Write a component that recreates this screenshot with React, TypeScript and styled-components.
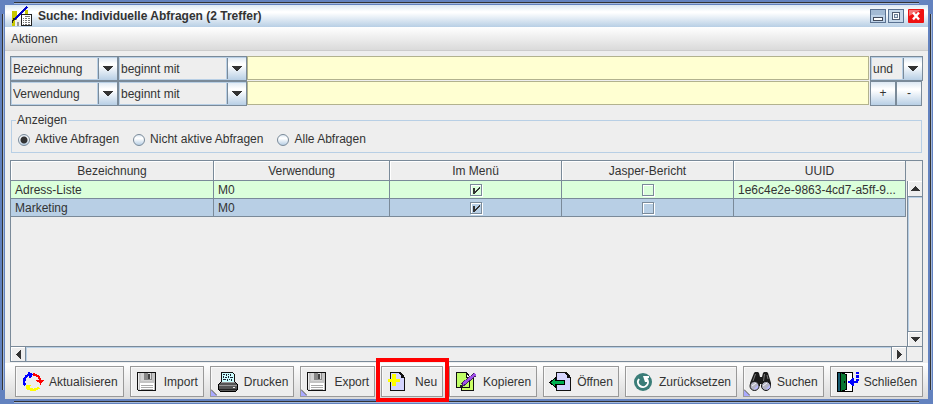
import React, { useState } from "react";
import styled, { createGlobalStyle, css } from "styled-components";

const color = {
  frame: "#6382bf",
  line: "#7a8a99",
  soft: "#b8cfe5",
  panel: "#eeeeee",
  text: "#333333",
};

const metal = "linear-gradient(#dde8f3 0%, #ffffff 30%, #ffffff 35%, #b8cfe5 100%)";

const GlobalStyle = createGlobalStyle`
  * { box-sizing: border-box; }
  body { margin: 0; }
  body, button, input, select { font: 12px/15px "Liberation Sans", Arial, sans-serif; color: ${color.text}; }
  svg { display: block; }
`;

const Window = styled.main`
  position: relative;
  display: flex;
  flex-direction: column;
  min-height: 100vh;
  border: 5px solid ${color.frame};
  background: ${color.panel};
`;

const FrameLine = styled.span<{ $side: "top" | "right" | "bottom" | "left" }>`
  position: absolute;
  background: #333;
  ${({ $side }) =>
    $side === "top" || $side === "bottom"
      ? css`
          left: 9px;
          right: 9px;
          height: 1px;
          ${$side}: -3px;
          box-shadow: 0 1px #a3b8dc;
        `
      : css`
          top: 9px;
          bottom: 9px;
          width: 1px;
          ${$side}: -3px;
          box-shadow: 1px 0 #a3b8dc;
        `}
`;

const TitleBar = styled.header`
  display: flex;
  align-items: center;
  height: 22px;
  padding: 0 4px 0 6px;
  background: ${metal};
`;

const Title = styled.h1`
  flex: 1;
  margin: 0 0 0 5px;
  padding-top: 1px;
  font-size: 12px;
  line-height: 15px;
`;

const WindowButtons = styled.div`
  display: flex;
  gap: 2px;
`;

const WindowButton = styled.button<{ $close?: boolean }>`
  width: 16px;
  height: 14px;
  padding: 0;
  border: 0;
  background: none;
  margin-left: ${({ $close }) => ($close ? "2px" : "0")};
`;

const MenuBar = styled.nav`
  height: 24px;
  padding: 0 6px;
  border-bottom: 1px solid #cccccc;
  background: linear-gradient(#ffffff, #dadada);
`;

const MenuItem = styled.button`
  padding: 5px 0 3px;
  border: 0;
  background: none;
`;

const Content = styled.div`
  flex: 1;
  display: flex;
  flex-direction: column;
  padding: 5px 5px 1px;
`;

const FilterRow = styled.div`
  display: flex;
  height: 25px;
`;

const ComboBox = styled.div<{ $width: number }>`
  position: relative;
  flex: none;
  width: ${({ $width }) => $width}px;
  border: 1px solid ${color.line};
  background: ${metal};

  svg {
    position: absolute;
    top: 9px;
    right: 4px;
    pointer-events: none;
  }
`;

const ComboSelect = styled.select`
  appearance: none;
  width: 100%;
  height: 100%;
  padding: 2px 20px 0 1px;
  border: 1px solid ${color.soft};
  border-right: 0;
  border-radius: 0;
  background:
    linear-gradient(${color.line}, ${color.line}) right 18px top / 1px 100% no-repeat,
    linear-gradient(${color.soft}, ${color.soft}) right 19px top / 1px 100% no-repeat,
    linear-gradient(to left, transparent 18px, ${color.panel} 18px);
`;

const FilterInput = styled.input`
  flex: 1;
  min-width: 0;
  height: 24px;
  margin-right: 1px;
  padding: 0 4px;
  border: 1px solid #b2b28e;
  border-radius: 0;
  background: #ffffd2;
`;

const RowActions = styled.div`
  display: flex;
  width: 53px;
`;

const SmallButton = styled.button`
  width: 26px;
  padding: 0;
  border: 1px solid ${color.line};
  background: ${metal};
`;

const Group = styled.fieldset`
  display: flex;
  gap: 14px;
  min-width: 0;
  margin: 7px 1px 0;
  padding: 4px 6px 5px;
  border: 1px solid ${color.soft};

  legend {
    margin-left: -2px;
    padding: 0 1px;
  }
`;

const RadioLabel = styled.label`
  display: flex;
  align-items: center;
  gap: 5px;
`;

const Radio = styled.input`
  appearance: none;
  width: 12px;
  height: 12px;
  margin: 0;
  border: 1px solid ${color.line};
  border-radius: 50%;
  background: ${metal};

  &:checked {
    background: radial-gradient(circle, #333 0 3px, transparent 4px), ${metal};
  }
`;

const TablePane = styled.section`
  flex: 1;
  display: grid;
  grid-template-columns: minmax(0, 1fr) 16px;
  grid-template-rows: minmax(169px, 1fr) 15px;
  margin-top: 7px;
  border: 1px solid ${color.line};
`;

const Table = styled.table`
  align-self: start;
  width: 100%;
  table-layout: fixed;
  border-collapse: separate;
  border-spacing: 0;
`;

const Column = styled.col<{ $width?: number }>`
  width: ${({ $width }) => ($width ? `${$width}px` : "auto")};
`;

const HeadCell = styled.th`
  height: 20px;
  padding: 2px 4px 0;
  border-right: 1px solid ${color.line};
  border-bottom: 1px solid ${color.line};
  box-shadow: inset 1px 1px #fff;
  font-weight: normal;
`;

const Row = styled.tr<{ $selected: boolean }>`
  background: ${({ $selected }) => ($selected ? color.soft : "#dbffdb")};
`;

const Cell = styled.td<{ $center?: boolean }>`
  height: 18px;
  padding: ${({ $center }) => ($center ? "0 4px" : "2px 4px 0")};
  border-right: 1px solid ${color.line};
  border-bottom: 1px solid ${color.line};
  white-space: nowrap;
  text-align: ${({ $center }) => ($center ? "center" : "left")};
`;

const CheckLabel = styled.label`
  position: relative;
  display: block;
  width: 12px;
  height: 12px;
  margin: 0 auto;

  svg {
    position: absolute;
    top: 2px;
    left: 2px;
    visibility: hidden;
    pointer-events: none;
  }
  input:checked + svg { visibility: visible; }
`;

const Check = styled.input`
  appearance: none;
  display: block;
  width: 12px;
  height: 12px;
  margin: 0;
  border: 1px solid ${color.line};
  box-shadow: inset 1px 1px #fff, 1px 1px #fff;
`;

const VerticalBar = styled.div`
  display: flex;
  flex-direction: column;
  padding: 20px 0 0 1px;
`;

const VerticalTrack = styled.div`
  flex: 1;
  border-left: 1px solid ${color.line};
  box-shadow: inset 1px 1px ${color.soft};
`;

const HorizontalBar = styled.div`
  display: flex;
  border-top: 1px solid ${color.line};
`;

const HorizontalTrack = styled.div`
  flex: 1;
  box-shadow: inset 1px 1px ${color.soft};
`;

const ScrollButton = styled.button<{ $edge: "top" | "bottom" | "left" | "right" }>`
  display: grid;
  place-items: center;
  width: 15px;
  height: ${({ $edge }) => ($edge === "top" ? 16 : $edge === "bottom" ? 15 : 14)}px;
  padding: 0;
  border: 0 solid ${color.line};
  border-left-width: ${({ $edge }) => ($edge === "left" ? 0 : 1)}px;
  border-right-width: ${({ $edge }) => ($edge === "left" ? 1 : 0)}px;
  border-top-width: ${({ $edge }) => ($edge === "bottom" ? 1 : 0)}px;
  border-bottom-width: ${({ $edge }) => ($edge === "top" ? 1 : 0)}px;
  background: ${color.panel};
  box-shadow: inset 1px 1px #fff;
`;

const ScrollCorner = styled.div`
  border-top: 1px solid ${color.line};
  border-left: 1px solid ${color.line};
`;

const Toolbar = styled.footer`
  display: flex;
  gap: 6px;
  padding: 3px 2px 2px 10px;
  background: linear-gradient(#ffffff, #dadada);
`;

const ToolItem = styled.div`
  position: relative;
`;

const ToolButton = styled.button`
  display: flex;
  align-items: center;
  gap: 4px;
  height: 31px;
  padding: 1px 5px 0;
  border: 1px solid #999999;
  background: ${color.panel};
  box-shadow: inset 1px 1px #fafafa;
  white-space: nowrap;
`;

const Corner = styled.svg`
  position: absolute;
  left: 1px;
  bottom: 1px;
  pointer-events: none;
`;

const Highlight = styled.span`
  position: absolute;
  inset: -8px -6px -5px -5px;
  z-index: 1;
  border: 4px solid #ff0000;
  pointer-events: none;
`;

type Direction = "up" | "down" | "left" | "right";

const arrows: Record<Direction, string> = {
  up: "M4 0h1v1h1v1h1v1h1v1h1v1H0V4h1V3h1V2h1V1h1z",
  down: "M0 0h9v1H8v1H7v1H6v1H5v1H4V4H3V3H2V2H1V1H0z",
  left: "M4 0h1v9H4V8H3V7H2V6H1V5H0V4h1V3h1V2h1V1h1z",
  right: "M0 0h1v1h1v1h1v1h1v1h1v1H4v1H3v1H2v1H1v1H0z",
};

function Arrow({ to }: { to: Direction }) {
  const flat = to === "up" || to === "down";
  return (
    <svg width={flat ? 9 : 5} height={flat ? 5 : 9} shapeRendering="crispEdges" aria-hidden="true">
      <path d={arrows[to]} fill="#333" />
    </svg>
  );
}

function Combo({ label, width, options }: { label: string; width: number; options: string[] }) {
  return (
    <ComboBox $width={width}>
      <ComboSelect aria-label={label}>
        {options.map((o) => (
          <option key={o}>{o}</option>
        ))}
      </ComboSelect>
      <svg width="10" height="5" shapeRendering="crispEdges" aria-hidden="true">
        <path d="M0 0h10v1H9v1H8v1H7v1H6v1H4V4H3V3H2V2H1V1H0z" fill="#333" />
      </svg>
    </ComboBox>
  );
}

function TitleIcon() {
  return (
    <svg width="22" height="21" viewBox="0 0 22 21" shapeRendering="crispEdges" aria-hidden="true">
      <path d="M1 5h5v15H1z" fill="#c8c800" />
      <path d="M14 4h3v6h-3z" fill="#c8c800" />
      <path d="M6 5h8v4h-4v5H6z" fill="#fff" />
      <path d="M4 14h6v6H4z" fill="#eee" />
      <path d="M6 16h2v4H6z" fill="#999" />
      <path d="M3 14L16 1" stroke="#0000c8" strokeWidth="2" />
      <path d="M1 17v-3h1v-2h2v2H3v1H2v2z" fill="#222" />
      <path d="M10.500 8.500h10v11h-10z" fill="#fff" stroke="#222" />
      <path d="M14 10h5v1h-5zM12 12h1v1h-1zM14 12h2v1h-2zM17 12h2v1h-2zM12 14h1v1h-1zM14 14h2v1h-2zM17 14h2v1h-2zM12 16h1v1h-1zM14 16h2v1h-2zM17 16h2v1h-2zM12 18h1v1h-1zM14 18h2v1h-2zM17 18h2v1h-2z" fill="#777" />
    </svg>
  );
}

function MinimizeIcon() {
  return (
    <svg width="16" height="14" viewBox="0 0 16 14" shapeRendering="crispEdges" aria-hidden="true">
      <path d="M.5.500h15v13H.5z" fill="#bed2e8" stroke="#5a7292" />
      <path d="M1 1h14v5H1z" fill="#a3bad4" />
      <path d="M3.500 8.500h9v3h-9z" fill="#fff" stroke="#444c5c" />
    </svg>
  );
}

function MaximizeIcon() {
  return (
    <svg width="16" height="14" viewBox="0 0 16 14" shapeRendering="crispEdges" aria-hidden="true">
      <path d="M.5.500h15v13H.5z" fill="#c6d8ea" stroke="#5a7292" />
      <path d="M4.500 3.500h7v7h-7z" fill="#fff" stroke="#4d5a70" />
      <path d="M6.500 5.500h3v3h-3z" fill="#dde8f3" stroke="#6d7f96" />
    </svg>
  );
}

function CloseIcon() {
  return (
    <svg width="16" height="14" viewBox="0 0 16 14" aria-hidden="true">
      <rect width="16" height="14" rx="1" fill="#ee1111" />
      <path d="M1 1h12L1 7z" fill="#f47474" />
      <path d="M5 3.500l6 7M11 3.500l-6 7" stroke="#fff" strokeWidth="2.400" />
    </svg>
  );
}

function RefreshIcon() {
  return (
    <>
      <path d="M4 15.500C1.500 11 4 6 8 4.500" fill="none" stroke="#0000ff" strokeWidth="2.500" />
      <path d="M7 2h2v1h2v1h1v1h-1v2h-1v1H8V6H7z" fill="#0000ff" />
      <path d="M12 4.500c4 0 7 2.500 7 6.500" fill="none" stroke="#ff0000" strokeWidth="2.500" />
      <path d="M15 10h8v1h-1v1h-1v1h-1v2h-1v-2h-1v-1h-2v-1h-1z" fill="#ff0000" />
      <path d="M18 17.500c-3 3-8 3-11 .5" fill="none" stroke="#ffff00" strokeWidth="2.500" />
      <path d="M5 15h5v1H9v1H8v2H7v1H6v-1H5z" fill="#ffff00" />
    </>
  );
}

function DiskIcon() {
  return (
    <>
      <path d="M1.500 2.500h18v18h-17l-1-1z" fill="#c4c4c4" stroke="#111" />
      <path d="M2 3h1v16H2z" fill="#eee" />
      <path d="M5 3h11v8H5z" fill="#d4d4d4" />
      <path d="M8 3h8v7H8z" fill="#888" />
      <path d="M12 3h3v6h-3z" fill="#ddd" />
      <path d="M12 4h2v5h-2z" fill="#444" />
      <path d="M4 13h14v7H4z" fill="#fff" />
      <path d="M5 15h12v1H5zM5 17h12v1H5zM5 19h12v1H5z" fill="#aaa" />
    </>
  );
}

function PrinterIcon() {
  return (
    <>
      <path d="M5.500 2.500h11l2 2v9h-13z" fill="#ccffff" stroke="#111" />
      <path d="M7 4h2v1H7zM10 4h1v2h-1zM12 4h1v1h-1zM14 4h1v2h-1zM7 6h1v2H7zM9 7h2v1H9zM12 6h1v2h-1zM14 7h3v1h-3zM7 9h3v1H7zM11 9h1v2h-1zM13 9h1v1h-1zM15 9h1v2h-1z" fill="#223" />
      <path d="M4.500 12.500h15l2 2v5l-2 2h-15l-2-2v-5z" fill="#555" stroke="#000" />
      <path d="M5 12h14v1H5zM3 15h18v1H3z" fill="#999" />
      <path d="M17 17h2v1h-2z" fill="#eee" />
      <path d="M3 19h18v1H3z" fill="#222" />
    </>
  );
}

function NewIcon() {
  return (
    <>
      <path d="M3.500 2.500h10l4 5v13h-14z" fill="#d5d5ff" stroke="#111" />
      <path d="M13.500 2.500l1 5h3z" fill="#fff" stroke="#111" />
      <path d="M12 3l2 1 3 4" fill="none" stroke="#111" />
      <path d="M5 4h4v5h4v3H9v4H5v-4H1V9h4z" fill="#ffff00" />
    </>
  );
}

function CopyIcon() {
  return (
    <>
      <path d="M6.500 6.500h12v14h-12z" fill="#ccff66" stroke="#111" />
      <path d="M1.500 2.500h10l3 4v11h-13z" fill="#bfff66" stroke="#111" />
      <path d="M11 3v4h3" fill="#fff" stroke="#111" />
      <path d="M7 15L20 4.500" stroke="#442266" strokeWidth="4" />
      <path d="M8 14L20.500 4" stroke="#a050e8" strokeWidth="2.500" />
      <path d="M5 15h2v1h1v1H5z" fill="#222" />
    </>
  );
}

function OpenIcon() {
  return (
    <>
      <path d="M7.500 2.500h10l4 5v13h-14z" fill="#d5d5ff" stroke="#111" />
      <path d="M17.500 2.500l1 5h3z" fill="#fff" stroke="#111" />
      <path d="M16 3l2 1 3 4" fill="none" stroke="#111" />
      <path d="M1 12.500L6.500 7.500V10.500H15.500V14.500H6.500V17.500z" fill="#00b050" stroke="#000" />
    </>
  );
}

function ResetIcon() {
  return (
    <g shapeRendering="auto">
      <circle cx="12" cy="12" r="9" fill="#3a7d78" />
      <path d="M8 9a5 5 0 1 0 7.500-.5" fill="none" stroke="#fff" strokeWidth="2" />
      <path d="M12 6h6v2l-2 .5V12h-2z" fill="#fff" />
    </g>
  );
}

function BinocularsIcon() {
  return (
    <g shapeRendering="auto">
      <path d="M5 3l1-1h3l1 1 1 4h2l1-4 1-1h3l1 1 3 10v3h-9v-2h-2v2H1v-3z" fill="#1a1a1a" />
      <path d="M6.500 4L4 11M15.500 4l-1 7M18 5l1 4" stroke="#777" />
      <circle cx="5.500" cy="16" r="4.500" fill="#b4b4c4" stroke="#111" />
      <circle cx="17" cy="16" r="4.500" fill="#b4b4c4" stroke="#111" />
      <path d="M5 19a3 3 0 0 0 4-4zM17 19a3 3 0 0 0 4-4z" fill="#b8b8ff" />
      <path d="M3 16l4-3M14 16l4-3" stroke="#f4f4f4" />
    </g>
  );
}

function ExitIcon() {
  return (
    <>
      <path d="M1.500 2.500h15v19h-15z" fill="#fff" stroke="#000" />
      <path d="M2 3h3v18H2z" fill="#155a70" />
      <path d="M4.500 2.500l6 2v15l-6 2z" fill="#087830" stroke="#000" />
      <path d="M8 11h1v2H8z" fill="#000" />
      <path d="M20 2h3v2h-3zM20 5h3v3h-3zM20 9h3v2h-1v2h-4v3h-2v-1h-1v-1h-1v-1h-2v-2h2v-1h1V9h1V8h2v3h2z" fill="#0000ff" />
    </>
  );
}

interface Tool {
  label: string;
  icon: () => React.ReactElement;
  menu?: boolean;
  marked?: boolean;
}

const tools: Tool[] = [
  { label: "Aktualisieren", icon: RefreshIcon },
  { label: "Import", icon: DiskIcon },
  { label: "Drucken", icon: PrinterIcon, menu: true },
  { label: "Export", icon: DiskIcon, menu: true },
  { label: "Neu", icon: NewIcon, marked: true },
  { label: "Kopieren", icon: CopyIcon },
  { label: "Öffnen", icon: OpenIcon },
  { label: "Zurücksetzen", icon: ResetIcon },
  { label: "Suchen", icon: BinocularsIcon, menu: true },
  { label: "Schließen", icon: ExitIcon },
];

const columns: { title: string; width?: number }[] = [
  { title: "Bezeichnung" },
  { title: "Verwendung", width: 176 },
  { title: "Im Menü", width: 172 },
  { title: "Jasper-Bericht", width: 172 },
  { title: "UUID", width: 172 },
];

const rows = [
  { name: "Adress-Liste", usage: "M0", menu: true, jasper: false, uuid: "1e6c4e2e-9863-4cd7-a5ff-9..." },
  { name: "Marketing", usage: "M0", menu: true, jasper: false, uuid: "" },
];

const filters = ["Bezeichnung", "Verwendung"];
const views = ["Aktive Abfragen", "Nicht aktive Abfragen", "Alle Abfragen"];

function CheckBox({ label, checked }: { label: string; checked: boolean }) {
  return (
    <CheckLabel>
      <Check type="checkbox" aria-label={label} defaultChecked={checked} />
      <svg width="9" height="8" viewBox="0 0 9 8" shapeRendering="crispEdges" aria-hidden="true">
        <path d="M1 2h2v3h1V4h1V3h1V2h1V1h1v2H7v1H6v1H5v1H4v1H3v1H1z" fill="#333" />
      </svg>
    </CheckLabel>
  );
}

export default function App() {
  const [view, setView] = useState(views[0]);
  return (
    <>
      <GlobalStyle />
      <Window>
        <FrameLine $side="top" />
        <FrameLine $side="right" />
        <FrameLine $side="bottom" />
        <FrameLine $side="left" />
        <TitleBar>
          <TitleIcon />
          <Title>Suche: Individuelle Abfragen (2 Treffer)</Title>
          <WindowButtons>
            <WindowButton aria-label="Minimieren"><MinimizeIcon /></WindowButton>
            <WindowButton aria-label="Maximieren"><MaximizeIcon /></WindowButton>
            <WindowButton aria-label="Fenster schließen" $close><CloseIcon /></WindowButton>
          </WindowButtons>
        </TitleBar>
        <MenuBar>
          <MenuItem>Aktionen</MenuItem>
        </MenuBar>
        <Content>
          {filters.map((name, i) => (
            <FilterRow key={name}>
              <Combo label="Feld" width={108} options={[name, ...filters.filter((f) => f !== name)]} />
              <Combo label="Vergleich" width={129} options={["beginnt mit"]} />
              <FilterInput aria-label={name} />
              {i === 0 ? (
                <Combo label="Verknüpfung" width={53} options={["und"]} />
              ) : (
                <RowActions>
                  <SmallButton>+</SmallButton>
                  <SmallButton>-</SmallButton>
                </RowActions>
              )}
            </FilterRow>
          ))}
          <Group>
            <legend>Anzeigen</legend>
            {views.map((v) => (
              <RadioLabel key={v}>
                <Radio type="radio" name="view" checked={view === v} onChange={() => setView(v)} />
                {v}
              </RadioLabel>
            ))}
          </Group>
          <TablePane>
            <Table>
              <colgroup>
                {columns.map((c) => (
                  <Column key={c.title} $width={c.width} />
                ))}
              </colgroup>
              <thead>
                <tr>
                  {columns.map((c) => (
                    <HeadCell key={c.title}>{c.title}</HeadCell>
                  ))}
                </tr>
              </thead>
              <tbody>
                {rows.map((r, i) => (
                  <Row key={r.name} $selected={i === 1}>
                    <Cell>{r.name}</Cell>
                    <Cell>{r.usage}</Cell>
                    <Cell $center><CheckBox label="Im Menü" checked={r.menu} /></Cell>
                    <Cell $center><CheckBox label="Jasper-Bericht" checked={r.jasper} /></Cell>
                    <Cell>{r.uuid}</Cell>
                  </Row>
                ))}
              </tbody>
            </Table>
            <VerticalBar>
              <ScrollButton $edge="top" aria-label="Nach oben"><Arrow to="up" /></ScrollButton>
              <VerticalTrack />
              <ScrollButton $edge="bottom" aria-label="Nach unten"><Arrow to="down" /></ScrollButton>
            </VerticalBar>
            <HorizontalBar>
              <ScrollButton $edge="left" aria-label="Nach links"><Arrow to="left" /></ScrollButton>
              <HorizontalTrack />
              <ScrollButton $edge="right" aria-label="Nach rechts"><Arrow to="right" /></ScrollButton>
            </HorizontalBar>
            <ScrollCorner />
          </TablePane>
        </Content>
        <Toolbar>
          {tools.map(({ label, icon: Icon, menu, marked }) => (
            <ToolItem key={label}>
              <ToolButton>
                <svg width="24" height="24" viewBox="0 0 24 24" shapeRendering="crispEdges" aria-hidden="true">
                  <Icon />
                </svg>
                {label}
              </ToolButton>
              {menu && (
                <Corner width="6" height="7" viewBox="0 0 6 7" aria-hidden="true">
                  <path d="M0 1l6 6H0z" fill="#aaaaff" />
                  <path d="M0 .5l6 6" stroke="#444" />
                </Corner>
              )}
              {marked && <Highlight />}
            </ToolItem>
          ))}
        </Toolbar>
      </Window>
    </>
  );
}
